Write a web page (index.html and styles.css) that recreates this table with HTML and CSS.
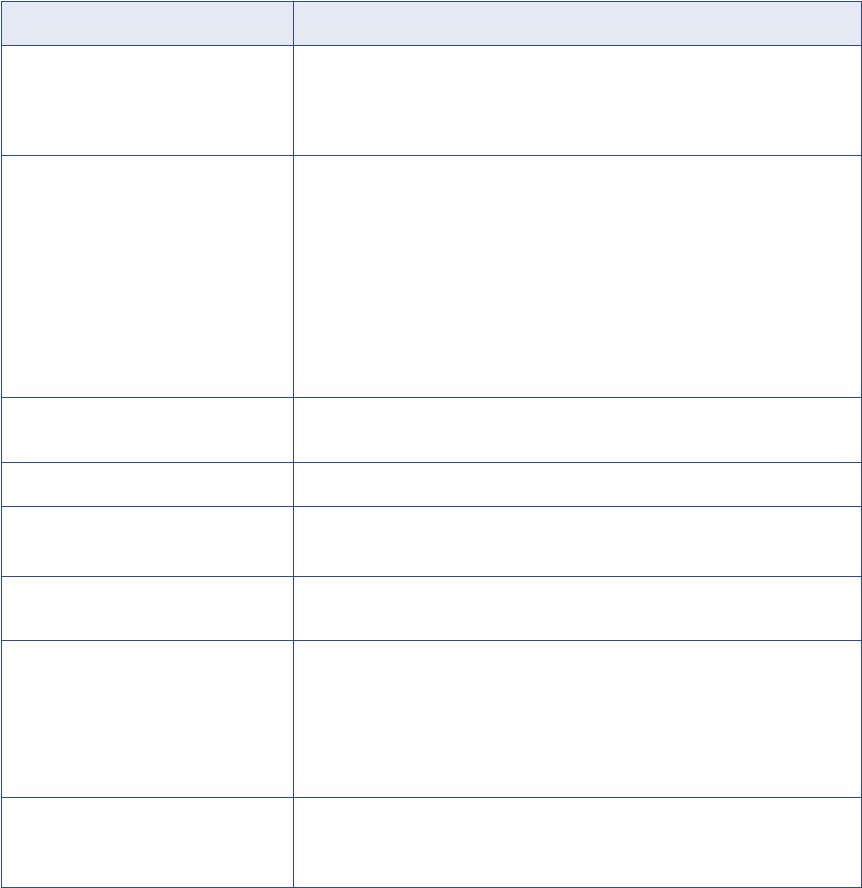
FILE: index.html
```html
<!DOCTYPE html>
<html lang="en">
<head>
    <meta charset="UTF-8">
    <title>Table</title>
    <link rel="stylesheet" href="styles.css">
</head>
<body>
    <table class="grid">
        <thead>
            <tr class="head"><th class="col-a"></th><th class="col-b"></th></tr>
        </thead>
        <tbody>
            <tr class="r1"><td></td><td></td></tr>
            <tr class="r2"><td></td><td></td></tr>
            <tr class="r3"><td></td><td></td></tr>
            <tr class="r4"><td></td><td></td></tr>
            <tr class="r5"><td></td><td></td></tr>
            <tr class="r6"><td></td><td></td></tr>
            <tr class="r7"><td></td><td></td></tr>
            <tr class="r8"><td></td><td></td></tr>
        </tbody>
    </table>
</body>
</html>
```

FILE: styles.css
```css
body {
    margin: 0;
    padding: 1px 0 0 1px;
    background: #fff;
    font-family: 'Liberation Sans', Arial, sans-serif;
}

.grid {
    border-collapse: collapse;
    table-layout: fixed;
    width: 861px;
}

.grid th,
.grid td {
    border: 1px solid #284c99;
    padding: 0;
}

.grid th {
    background: #e4e9f4;
}

.col-a { width: 291px; }

.head { height: 44px; }
.r1 { height: 110px; }
.r2 { height: 242px; }
.r3 { height: 65px; }
.r4 { height: 44px; }
.r5 { height: 70px; }
.r6 { height: 64px; }
.r7 { height: 157px; }
.r8 { height: 90px; }
```
